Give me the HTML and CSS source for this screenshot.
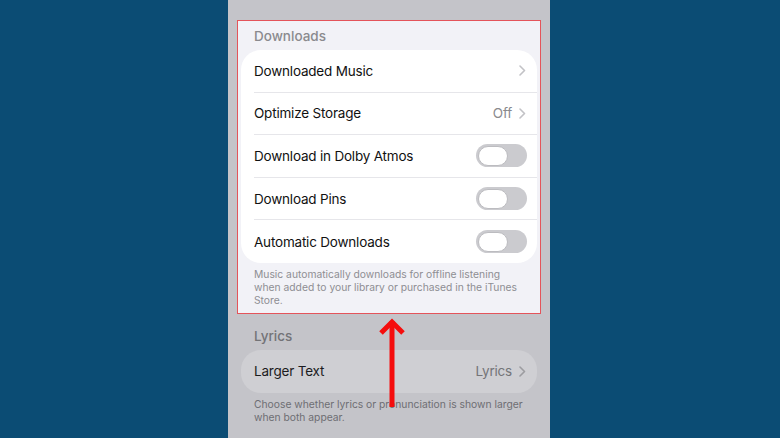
FILE: index.html
```html
<!DOCTYPE html>
<html lang="en">
<head>
  <meta charset="UTF-8" />
  <meta name="viewport" content="width=device-width, initial-scale=1.0"/>
  <title>Music Settings</title>
  <link rel="stylesheet" href="styles.css">
</head>
<body>
  <div class="phone">
    <div class="top-gap"></div>

    <section class="group highlight">
      <div class="group-title">Downloads</div>
      <div class="card">
        <div class="row">
          <span class="label">Downloaded Music</span>
          <span class="value"><svg class="chev" width="7" height="11" viewBox="0 0 7 11"><polyline points="1,1 5.5,5.5 1,10"/></svg></span>
        </div>
        <div class="row">
          <span class="label">Optimize Storage</span>
          <span class="value">Off <svg class="chev" width="7" height="11" viewBox="0 0 7 11"><polyline points="1,1 5.5,5.5 1,10"/></svg></span>
        </div>
        <div class="row">
          <span class="label">Download in Dolby Atmos</span>
          <span class="toggle"><span class="knob"></span></span>
        </div>
        <div class="row">
          <span class="label">Download Pins</span>
          <span class="toggle"><span class="knob"></span></span>
        </div>
        <div class="row">
          <span class="label">Automatic Downloads</span>
          <span class="toggle"><span class="knob"></span></span>
        </div>
      </div>
      <p class="group-note">Music automatically downloads for offline listening when added to your library or purchased in the iTunes Store.</p>
    </section>

    <section class="group dim">
      <div class="group-title">Lyrics</div>
      <div class="card">
        <div class="row">
          <span class="label">Larger Text</span>
          <span class="value">Lyrics <svg class="chev" width="7" height="11" viewBox="0 0 7 11"><polyline points="1,1 5.5,5.5 1,10"/></svg></span>
        </div>
      </div>
      <p class="group-note">Choose whether lyrics or pronunciation is shown larger when both appear.</p>
    </section>

    <!-- pointer up at the downloads block -->
    <svg class="arrow" width="30" height="92" viewBox="0 0 30 92">
      <line x1="15" y1="4" x2="15" y2="90" />
      <polyline points="4,16 15,5 26,16" />
    </svg>
  </div>
</body>
</html>
```

FILE: styles.css
```css
* {
  box-sizing: border-box;
}
body {
  margin: 0;
  height: 438px;
  overflow: hidden;
  background: #0b4c74;
  font-family: Inter, 'Noto Sans', sans-serif;
}

.phone {
  position: relative;
  width: 322px;
  height: 438px;
  margin-left: 228px;
  padding: 0 9px;
  background: #c4c4c9;
}

.top-gap {
  height: 20px;
}

.group {
  border: 1px solid transparent;
  padding: 7px 3px 6px;
}

.group.highlight {
  background: #f2f2f7;
  border-color: #e4545a;
}
.group.dim {
  padding-top: 13px;
}

.group-title {
  padding-left: 13px;
  font-size: 13.5px;
  line-height: 16px;
  font-weight: 500;
  color: #8a8a8e;
  margin-bottom: 6px;
}
.dim .group-title {
  color: #737377;
  margin-bottom: 6px;
}

.card {
  background: #fff;
  border-radius: 20px;
  overflow: hidden;
}
.dim .card {
  background: #cfcfd3;
}

.row {
  display: flex;
  align-items: center;
  justify-content: space-between;
  height: 42.6px;
  margin-left: 13px;
  padding-right: 11px;
  border-bottom: 1px solid #e6e6ea;
}
.row:last-child {
  border-bottom: none;
}

.label {
  font-size: 13.5px;
  letter-spacing: -0.2px;
  color: #111;
}
.dim .label {
  color: #1c1c1e;
}

.value {
  display: flex;
  align-items: center;
  gap: 7px;
  font-size: 13.5px;
  letter-spacing: -0.2px;
  color: #8a8a8e;
}
.dim .value {
  color: #747478;
}

.chev polyline {
  fill: none;
  stroke: #c2c2c6;
  stroke-width: 1.6;
  stroke-linecap: round;
  stroke-linejoin: round;
}
.dim .chev polyline {
  stroke: #9c9ca0;
}

.toggle {
  display: flex;
  align-items: center;
  width: 51px;
  height: 23px;
  margin-right: -1px;
  padding: 0 2px;
  border-radius: 12px;
  background: #cbcbcf;
}
.knob {
  width: 30px;
  height: 20px;
  border-radius: 10px;
  background: #fff;
  border: 1px solid #bcbcc0;
}

.group-note {
  margin: 5px 0 0;
  padding: 0 18px 0 13px;
  font-size: 10.3px;
  line-height: 13px;
  color: #8e8e93;
}
.dim .group-note {
  padding-right: 10px;
  color: #6e6e73;
}

.arrow {
  position: absolute;
  left: 149px;
  top: 317px;
}
.arrow line,
.arrow polyline {
  fill: none;
  stroke: #f50d0d;
  stroke-width: 5;
}
```
